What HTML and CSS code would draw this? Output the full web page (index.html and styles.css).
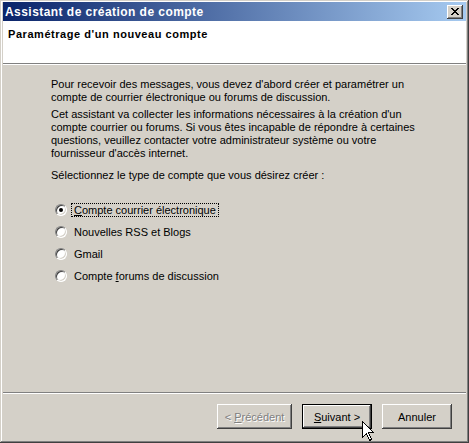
FILE: index.html
```html
<!DOCTYPE html>
<html lang="fr">
<head>
    <meta charset="UTF-8">
    <title>Assistant de création de compte</title>
    <link rel="stylesheet" href="styles.css">
</head>
<body>
    <div class="window">
        <!-- Title bar -->
        <div class="titlebar">
            <span class="title">Assistant de création de compte</span>
            <span class="close-btn">
                <svg width="8" height="7" viewBox="0 0 8 7" shape-rendering="crispEdges">
                    <path d="M0 0h2v1h-2zM6 0h2v1h-2zM1 1h2v1h-2zM5 1h2v1h-2zM2 2h4v1h-4zM3 3h2v1h-2zM2 4h4v1h-4zM1 5h2v1h-2zM5 5h2v1h-2zM0 6h2v1h-2zM6 6h2v1h-2z" fill="#000"/>
                </svg>
            </span>
        </div>

        <!-- Page header -->
        <div class="header">
            <h1>Paramétrage d'un nouveau compte</h1>
        </div>
        <div class="separator"></div>

        <!-- Page content -->
        <div class="content">
            <p>Pour recevoir des messages, vous devez d'abord créer et paramétrer un<br>compte de courrier électronique ou forums de discussion.</p>
            <p>Cet assistant va collecter les informations nécessaires à la création d'un<br>compte courrier ou forums. Si vous êtes incapable de répondre à certaines<br>questions, veuillez contacter votre administrateur système ou votre<br>fournisseur d'accès internet.</p>
            <p class="prompt">Sélectionnez le type de compte que vous désirez créer :</p>

            <ul class="choices">
                <li><span class="radio checked"></span><span class="label focused"><u>C</u>ompte courrier électronique</span></li>
                <li><span class="radio"></span><span class="label">Nouvelles RSS et Blogs</span></li>
                <li><span class="radio"></span><span class="label">Gmail</span></li>
                <li><span class="radio"></span><span class="label">Compte <u>f</u>orums de discussion</span></li>
            </ul>
        </div>

        <div class="separator"></div>

        <!-- Wizard buttons -->
        <div class="footer">
            <button class="btn wide" disabled>&lt; <u>P</u>récédent</button>
            <button class="btn default"><u>S</u>uivant &gt;</button>
            <button class="btn">Annuler</button>
        </div>

        <!-- Mouse pointer -->
        <svg class="cursor" width="12" height="20" viewBox="0 0 12 20" shape-rendering="crispEdges">
            <path d="M0.5 0.5V16.5L4.5 12.5L7.5 19.5L9.5 18.5L6.5 11.5H11.5Z" fill="#fff" stroke="#000" stroke-width="1" stroke-linejoin="miter"/>
        </svg>
    </div>
</body>
</html>
```

FILE: styles.css
```css
body {
    margin: 0;
    font-family: 'Liberation Sans', Arial, sans-serif;
    font-size: 11px;
    color: #000;
}
.window {
    position: relative;
    width: 469px;
    height: 443px;
    box-sizing: border-box;
    padding: 2px 3px 2px 3px;
    background-color: #d4d0c8;
    box-shadow: inset -1px -1px #404040, inset 1px 1px #d4d0c8,
                inset -2px -2px #808080, inset 2px 2px #fff;
    display: flex;
    flex-direction: column;
}
.titlebar {
    height: 19px;
    flex: none;
    display: flex;
    align-items: center;
    justify-content: space-between;
    padding: 0 3px 0 2px;
    background: linear-gradient(to right, #0a246a, #a6caf0);
}
.title {
    color: #fff;
    font-weight: bold;
    font-size: 12px;
    letter-spacing: 0.45px;
}
.close-btn {
    width: 16px;
    height: 14px;
    box-sizing: border-box;
    display: flex;
    align-items: center;
    justify-content: center;
    padding: 0 0 1px 0;
    background-color: #d4d0c8;
    box-shadow: inset -1px -1px #404040, inset 1px 1px #fff,
                inset -2px -2px #808080;
}
.header {
    height: 42px;
    flex: none;
    box-sizing: border-box;
    background-color: #fff;
    padding: 7px 0 0 5px;
}
h1 {
    margin: 0;
    font-size: 11px;
    line-height: 13px;
    font-weight: bold;
    letter-spacing: 0.55px;
}
.separator {
    height: 1px;
    flex: none;
    background-color: #808080;
    border-bottom: 1px solid #fff;
}
.content {
    flex: 1;
    padding: 13px 0 0 48px;
}
p {
    margin: 0 0 4px 0;
    line-height: 13px;
    white-space: nowrap;
}
.prompt {
    margin-top: 9px;
}
.choices {
    list-style: none;
    margin: 17px 0 0 4px;
    padding: 0;
}
.choices li {
    height: 22px;
    display: flex;
    align-items: center;
}
.radio {
    position: relative;
    width: 12px;
    height: 12px;
    flex: none;
    box-sizing: border-box;
    border-radius: 50%;
    background-color: #fff;
    border: 1px solid;
    border-color: #808080 #fff #fff #808080;
    box-shadow: inset 1px 1px #404040, inset -1px -1px #d4d0c8;
}
.radio.checked::after {
    content: "";
    position: absolute;
    left: 3px;
    top: 3px;
    width: 4px;
    height: 4px;
    border-radius: 50%;
    background-color: #000;
}
.label {
    margin-left: 4px;
    padding: 0 2px;
    line-height: 12px;
    border: 1px solid transparent;
}
.label.focused {
    border: 1px dotted #000;
}
.footer {
    height: 47px;
    flex: none;
    box-sizing: border-box;
    display: flex;
    justify-content: flex-end;
    align-items: flex-start;
    gap: 10px;
    padding: 10px 14px 0 0;
}
.btn {
    width: 70px;
    height: 25px;
    padding: 0;
    border: none;
    font-family: 'Liberation Sans', Arial, sans-serif;
    font-size: 11px;
    color: #000;
    background-color: #d4d0c8;
    box-shadow: inset -1px -1px #404040, inset 1px 1px #fff,
                inset -2px -2px #808080;
}
.btn.wide {
    width: 75px;
}
.btn:disabled {
    color: #808080;
    text-shadow: 1px 1px #fff;
}
.btn.default {
    box-shadow: inset 0 0 0 1px #000, inset -2px -2px #404040,
                inset 2px 2px #fff, inset -3px -3px #808080;
}
.cursor {
    position: absolute;
    left: 362px;
    top: 421px;
}
```
